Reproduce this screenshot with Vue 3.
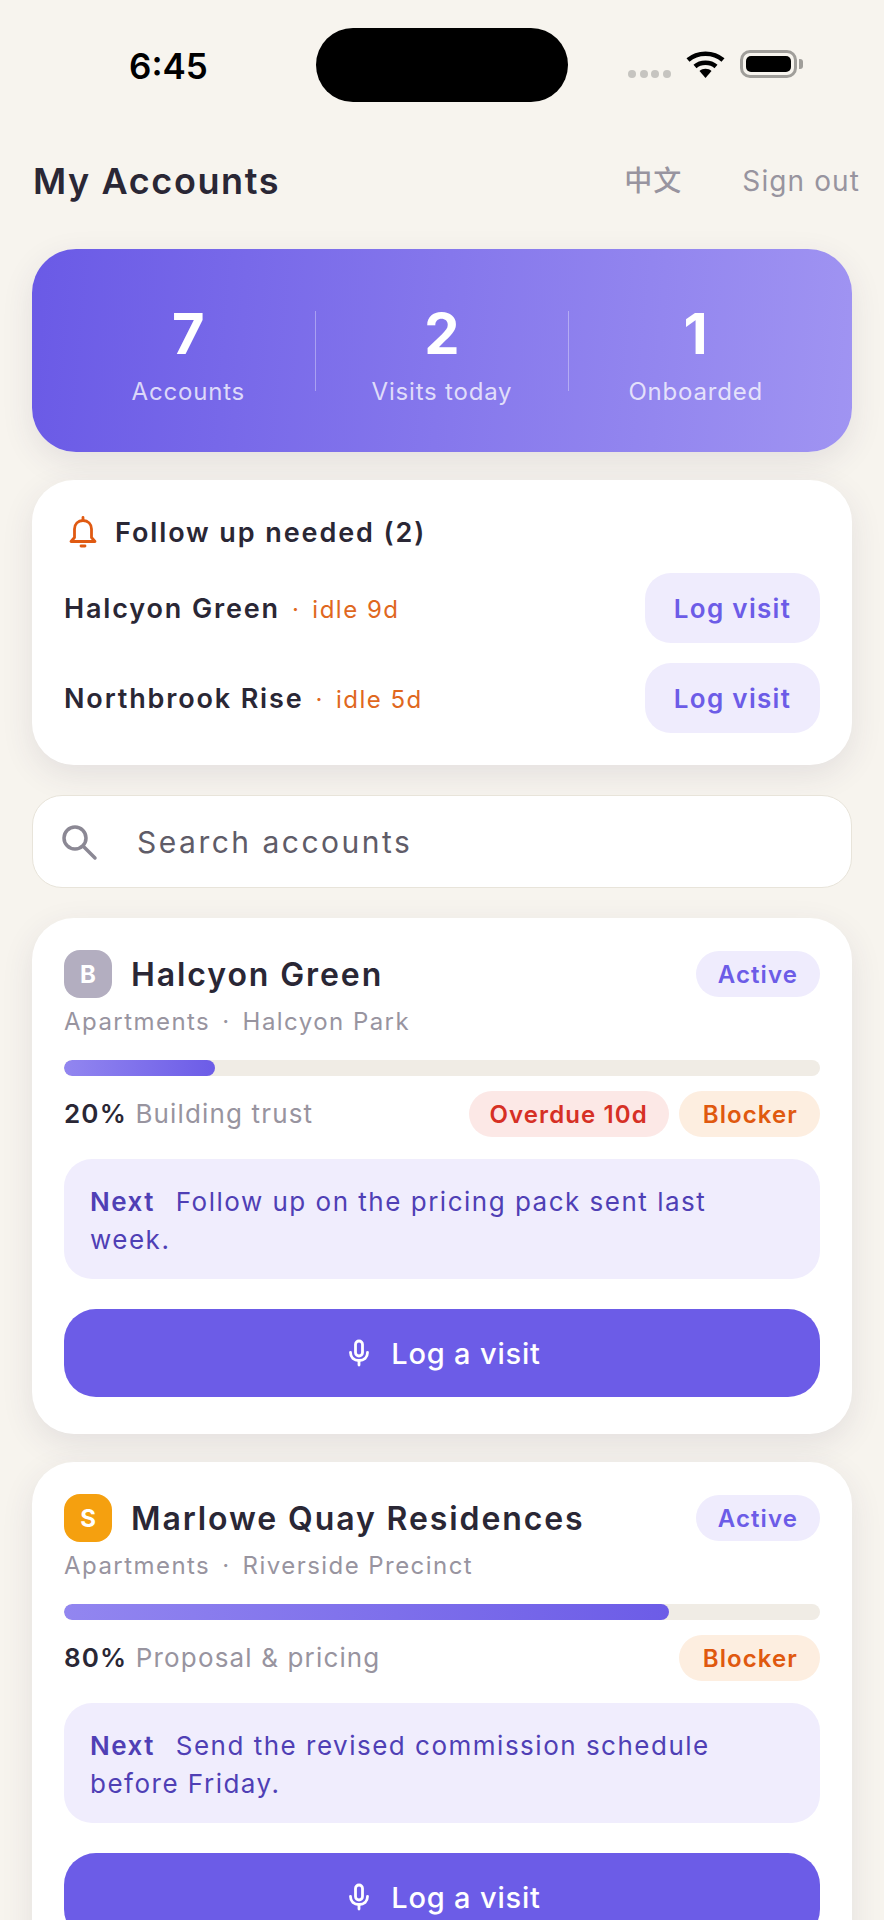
<script setup>
import { ref } from 'vue'

const stats = ref([
  { value: 7, label: 'Accounts' },
  { value: 2, label: 'Visits today' },
  { value: 1, label: 'Onboarded' }
])

const followUps = ref([
  { name: 'Halcyon Green', idle: 'idle 9d' },
  { name: 'Northbrook Rise', idle: 'idle 5d' }
])

const accounts = ref([
  {
    id: 1,
    initial: 'B',
    tone: 'grey',
    name: 'Halcyon Green',
    type: 'Apartments',
    place: 'Halcyon Park',
    percent: 20,
    stage: 'Building trust',
    overdue: 'Overdue 10d',
    next: 'Follow up on the pricing pack sent last week.'
  },
  {
    id: 2,
    initial: 'S',
    tone: 'amber',
    name: 'Marlowe Quay Residences',
    type: 'Apartments',
    place: 'Riverside Precinct',
    percent: 80,
    stage: 'Proposal & pricing',
    overdue: '',
    next: 'Send the revised commission schedule before Friday.'
  }
])
</script>

<template>
  <div class="page">
    <div class="status">
      <span class="time">6:45</span>
      <div class="island"></div>
      <div class="status-icons">
        <div class="dots"><i></i><i></i><i></i><i></i></div>
        <svg class="wifi" width="39" height="28" viewBox="0 0 39 28">
          <path d="M2 10C11.500 1.500 27.500 1.500 37 10" fill="none" stroke="#000" stroke-width="4.500" />
          <path d="M9 16.500C14.500 11.500 24.500 11.500 30 16.500" fill="none" stroke="#000" stroke-width="4.500" />
          <path d="M13.500 21C16.500 18 22.500 18 25.500 21L19.500 28Z" fill="#000" />
        </svg>
        <div class="battery"><div class="battery-fill"></div></div>
      </div>
    </div>

    <header class="top">
      <h1>My Accounts</h1>
      <div class="top-links">
        <span class="lang">中文</span>
        <span>Sign out</span>
      </div>
    </header>

    <section class="hero">
      <div v-for="s in stats" :key="s.label" class="stat">
        <div class="stat-value">{{ s.value }}</div>
        <div class="stat-label">{{ s.label }}</div>
      </div>
    </section>

    <section class="card follow">
      <div class="follow-head">
        <svg width="30" height="34" viewBox="0 0 30 34" fill="none" stroke="#e05a12" stroke-width="2.800" stroke-linejoin="round" stroke-linecap="round">
          <path d="M3 26.500h24l-3.500-4V14c0-5-3.500-8.500-8.500-8.500S6.500 9 6.500 14v8.500Z" />
          <path d="M15 2.500v3" />
          <path d="M13 31h4" />
        </svg>
        <span>Follow up needed (2)</span>
      </div>
      <div v-for="f in followUps" :key="f.name" class="follow-row">
        <div class="follow-info">
          <span class="follow-name">{{ f.name }}</span>
          <span class="follow-idle">·</span>
          <span class="follow-idle">{{ f.idle }}</span>
        </div>
        <button class="log-small">Log visit</button>
      </div>
    </section>

    <div class="search">
      <svg width="38" height="38" viewBox="0 0 38 38" fill="none" stroke="#8b8894" stroke-width="3.500" stroke-linecap="round">
        <circle cx="15" cy="15" r="11" />
        <path d="M23.500 23.500L35 35" />
      </svg>
      <span>Search accounts</span>
    </div>

    <section v-for="a in accounts" :key="a.id" class="card account">
      <div class="account-head">
        <div class="avatar" :class="a.tone">{{ a.initial }}</div>
        <div class="account-name">{{ a.name }}</div>
        <span class="pill pill-active">Active</span>
      </div>
      <div class="account-meta">
        <span>{{ a.type }}</span>
        <span>·</span>
        <span>{{ a.place }}</span>
      </div>
      <div class="track">
        <div class="fill" :style="{ width: a.percent + '%' }"></div>
      </div>
      <div class="progress-row">
        <div class="progress-text">
          <b>{{ a.percent }}%</b> <span>{{ a.stage }}</span>
        </div>
        <div class="pills">
          <span v-if="a.overdue" class="pill pill-overdue">{{ a.overdue }}</span>
          <span class="pill pill-blocker">Blocker</span>
        </div>
      </div>
      <div class="next"><b>Next</b> {{ a.next }}</div>
      <button class="log-big">
        <svg width="24" height="28" viewBox="0 0 24 28" fill="none" stroke="#fff" stroke-width="2.800" stroke-linecap="round">
          <rect x="8.500" y="2" width="7" height="15" rx="3.500" />
          <path d="M3.500 13.500c0 5 3.500 8 8.500 8s8.500-3 8.500-8" />
          <path d="M12 21.500V26" />
        </svg>
        <span>Log a visit</span>
      </button>
    </section>
  </div>
</template>

<style>
html, body {
  margin: 0;
  background: #f7f4ee;
}
</style>

<style scoped>
.page {
  height: 1920px;
  overflow: hidden;
  box-sizing: border-box;
  padding: 0 32px;
  background: #f7f4ee;
  font-family: Inter, "Noto Sans CJK SC", sans-serif;
  color: #2a2735;
}

.status {
  height: 130px;
  margin: 0 -32px;
  display: grid;
  grid-template-columns: 316px 252px 1fr;
  box-sizing: border-box;
  padding-top: 28px;
}
.time {
  padding-left: 129px;
  padding-top: 20px;
  font-size: 35px;
  line-height: 36px;
  font-weight: 600;
  color: #000;
}
.island {
  height: 74px;
  border-radius: 37px;
  background: #000;
}
.status-icons {
  display: flex;
  align-items: flex-start;
  padding: 22px 0 0 60px;
}
.dots {
  display: flex;
  gap: 3.600px;
  margin-top: 20px;
  margin-right: 15px;
}
.dots i {
  width: 8px;
  height: 8px;
  border-radius: 50%;
  background: #c6c4c0;
}
.wifi {
  margin-right: 15px;
}
.battery {
  width: 57px;
  height: 28px;
  padding: 3px;
  box-sizing: border-box;
  border: 3px solid #a09e9a;
  border-radius: 10px;
  position: relative;
}
.battery::after {
  content: "";
  position: absolute;
  right: -9px;
  top: 6px;
  width: 4px;
  height: 10px;
  background: #a09e9a;
  border-radius: 0 3px 3px 0;
}
.battery-fill {
  height: 100%;
  background: #000;
  border-radius: 5px;
}

.top {
  display: flex;
  justify-content: space-between;
  align-items: center;
  height: 102px;
  margin-bottom: 17px;
  margin-right: -8px;
  padding-left: 1px;
}
h1 {
  margin: 0;
  font-size: 36px;
  font-weight: 600;
  letter-spacing: 1.600px;
  color: #2a2735;
}
.top-links {
  display: flex;
  align-items: center;
  gap: 60px;
  font-size: 28px;
  line-height: 40px;
  letter-spacing: 1.100px;
  color: #98949f;
}
.lang {
  font-weight: 500;
}

.hero {
  height: 203px;
  display: flex;
  align-items: center;
  padding: 0 30px;
  border-radius: 44px;
  background: linear-gradient(95deg, #6a5ae6, #a094f2);
  box-shadow: 0 10px 32px rgba(60, 50, 90, 0.1);
  color: #fff;
}
.stat {
  flex: 1;
  height: 80px;
  display: flex;
  flex-direction: column;
  justify-content: center;
  align-items: center;
  border-left: 1px solid rgba(255, 255, 255, 0.35);
}
.stat:first-child {
  border-left: 0;
}
.stat-value {
  font-size: 56px;
  line-height: 62px;
  font-weight: 700;
  margin-top: 8px;
}
.stat-label {
  margin-top: 12px;
  font-size: 24px;
  line-height: 30px;
  letter-spacing: 0.800px;
  color: rgba(255, 255, 255, 0.76);
}

.card {
  background: #fff;
  border-radius: 42px;
  box-shadow: 0 10px 32px rgba(60, 50, 90, 0.1);
}
.follow {
  margin-top: 28px;
  padding: 32px;
  height: 285px;
  box-sizing: border-box;
}
.follow-head {
  display: flex;
  align-items: center;
  gap: 17px;
  height: 40px;
  margin-bottom: 21px;
  margin-left: 4px;
  font-size: 27px;
  font-weight: 600;
  letter-spacing: 1.900px;
}
.follow-row {
  display: flex;
  justify-content: space-between;
  align-items: center;
  margin-bottom: 20px;
}
.follow-info {
  display: flex;
  align-items: baseline;
  gap: 12px;
}
.follow-name {
  font-size: 27px;
  font-weight: 600;
  letter-spacing: 1.850px;
}
.follow-idle {
  font-size: 24px;
  letter-spacing: 1.500px;
  color: #e0681e;
}
.log-small {
  width: 175px;
  height: 70px;
  border: 0;
  border-radius: 26px;
  background: #efecfd;
  color: #6c5ce7;
  font-family: inherit;
  font-size: 26px;
  font-weight: 600;
  letter-spacing: 1.300px;
}

.search {
  margin-top: 30px;
  height: 93px;
  box-sizing: border-box;
  display: flex;
  align-items: center;
  gap: 39px;
  padding: 0 30px 0 27px;
  background: #fff;
  border: 1px solid #e8e4da;
  border-radius: 30px;
  font-size: 30px;
  letter-spacing: 2.500px;
  color: #5f5c68;
}

.account {
  margin-top: 30px;
  padding: 32px 32px 37px;
  box-sizing: border-box;
}
.account + .account {
  margin-top: 28px;
}
.account-head {
  display: flex;
  align-items: center;
  height: 48px;
}
.avatar {
  width: 48px;
  height: 48px;
  border-radius: 16px;
  display: flex;
  align-items: center;
  justify-content: center;
  color: #fff;
  font-size: 24px;
  font-weight: 700;
  margin-right: 19px;
}
.avatar.grey {
  background: #b3aec0;
}
.avatar.amber {
  background: #f5a00f;
}
.account-name {
  flex: 1;
  font-size: 32px;
  font-weight: 600;
  letter-spacing: 1.900px;
}
.account-meta {
  display: flex;
  gap: 12px;
  margin-top: 9px;
  font-size: 24px;
  line-height: 30px;
  letter-spacing: 1.450px;
  color: #98949f;
}
.track {
  margin-top: 23px;
  height: 16px;
  border-radius: 8px;
  background: #f0ece5;
  overflow: hidden;
}
.fill {
  height: 100%;
  border-radius: 8px;
  background: linear-gradient(90deg, #9286f0, #6c5ce7);
}
.progress-row {
  display: flex;
  justify-content: space-between;
  align-items: center;
  margin-top: 14px;
  height: 47px;
}
.progress-text {
  font-size: 26px;
  letter-spacing: 1.150px;
  color: #98949f;
}
.progress-text b {
  font-weight: 600;
  color: #2a2735;
}
.pills {
  display: flex;
  gap: 10px;
}
.pill {
  height: 46px;
  line-height: 47px;
  padding: 0 22px;
  border-radius: 23px;
  font-size: 24px;
  font-weight: 600;
  letter-spacing: 1.100px;
}
.pill-active {
  background: #efecfd;
  color: #6c5ce7;
}
.pill-overdue {
  padding: 0 21px;
  background: #fce8e6;
  color: #d63025;
}
.pill-blocker {
  padding-left: 24px;
  background: #fdeee0;
  color: #e0590f;
}
.next {
  margin-top: 22px;
  padding: 24px 44px 20px 26px;
  border-radius: 28px;
  background: #f0edfd;
  font-size: 26px;
  line-height: 38px;
  letter-spacing: 1.500px;
  color: #4f3fb5;
}
.next b {
  font-weight: 600;
  margin-right: 12px;
}
.log-big {
  margin-top: 30px;
  width: 100%;
  height: 88px;
  padding: 0 0 0 4px;
  border: 0;
  border-radius: 32px;
  background: #6c5ce7;
  color: #fff;
  display: flex;
  align-items: center;
  justify-content: center;
  gap: 20px;
  font-family: inherit;
  font-size: 29px;
  font-weight: 500;
  letter-spacing: 0.800px;
}
</style>
